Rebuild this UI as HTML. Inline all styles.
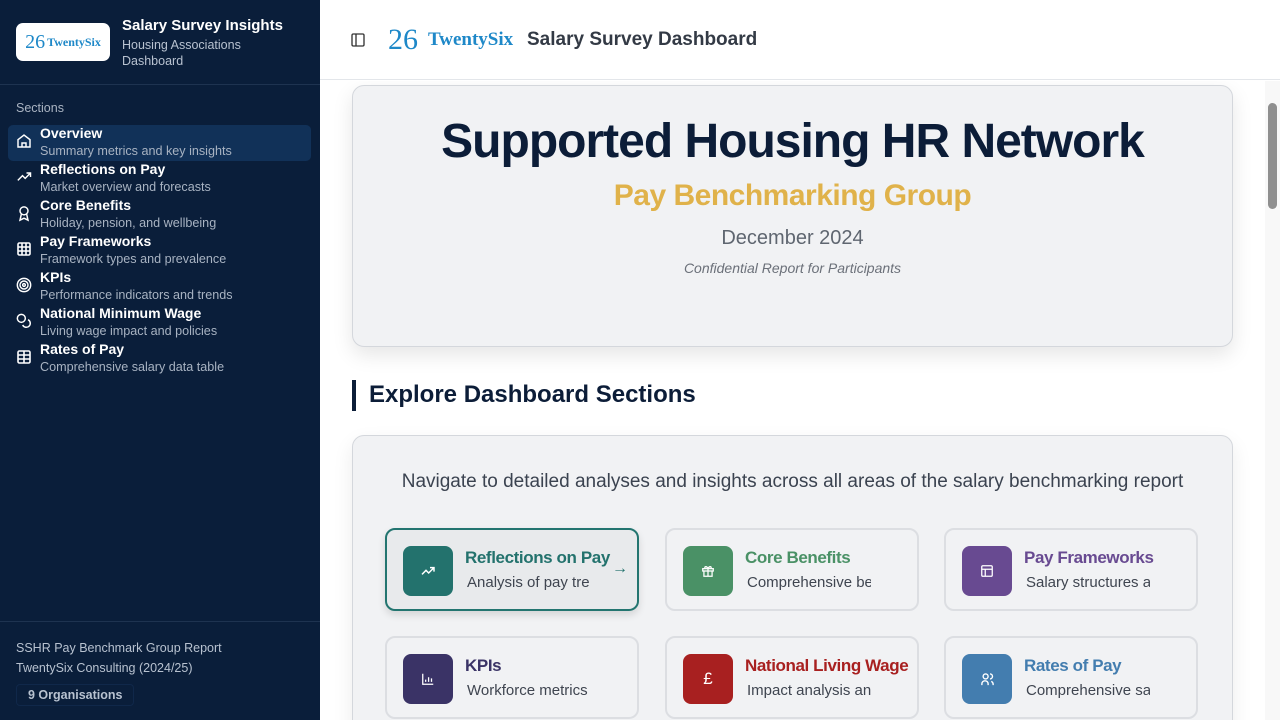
<!DOCTYPE html>
<html><head><meta charset="utf-8"><style>
*{box-sizing:border-box;margin:0;padding:0}
body{width:1280px;height:720px;overflow:hidden;font-family:"Liberation Sans",sans-serif;background:#fff;position:relative}
.sb{position:absolute;left:0;top:0;width:320px;height:720px;background:#0a1e3a;color:#fff}
.hdr{height:85px;border-bottom:1px solid #1e3350;position:relative}
.logo{position:absolute;left:16px;top:23px;width:94px;height:38px;background:#fff;border-radius:7px;display:flex;align-items:center;justify-content:center;color:#1e88c8;font-family:"Liberation Serif",serif;font-size:12px;font-weight:bold}
.ht{position:absolute;left:122px;top:17px}
.ht b{font-size:15px;display:block;margin-bottom:3px}
.ht span{font-size:12.5px;color:#b8c2d0;line-height:16px;display:block}
.sec{position:absolute;left:16px;top:101px;font-size:12.5px;color:#aab4c2}
.nav{position:absolute;left:8px;top:125px;width:303px}
.it{height:36px;position:relative;border-radius:5px}
.it.a{background:#113158}
.it svg{position:absolute;left:8px;top:8px}
.it b{position:absolute;left:32px;top:0px;font-size:14px;font-weight:bold}
.it span{position:absolute;left:32px;top:19px;font-size:12.6px;color:#a8b3c2}
.ft{position:absolute;left:0;top:621px;width:320px;border-top:1px solid #1e3350;padding:16px;font-size:12.5px;color:#b8c2d0;line-height:20px}
.badge{display:inline-block;margin-top:6px;padding:0 11px;font-weight:bold;border:1px solid #10284a;border-radius:4px}
.top{position:absolute;left:320px;top:0;width:960px;height:80px;border-bottom:1px solid #e3e6ea;background:#fff}
.main{position:absolute;left:320px;top:81px;width:945px;height:639px;background:#fff;overflow:hidden}
.sbar{position:absolute;left:1265px;top:81px;width:15px;height:639px;background:#f8f8f8}
.thumb{position:absolute;left:1268px;top:103px;width:9px;height:106px;background:#8f8f8f;border-radius:5px}
.hero{position:absolute;left:32px;top:4px;width:881px;height:262px;background:#f1f2f4;border:1px solid #d4d7dc;border-radius:12px;box-shadow:0 8px 20px rgba(0,0,0,.1);text-align:center}
.h1{margin-top:28px;font-size:48px;font-weight:bold;color:#0c1d38;letter-spacing:-1px}
.h2{margin-top:10px;font-size:30px;font-weight:bold;color:#e0b24a;letter-spacing:-.5px}
.h3{margin-top:14px;font-size:20px;color:#5f6670}
.h4{margin-top:10px;font-size:14px;font-style:italic;color:#6b7079}
.st{position:absolute;left:32px;top:299px;height:31px;border-left:4px solid #0c1d38;padding-left:13px;font-size:24px;font-weight:bold;color:#0c1d38;line-height:30px}
.panel{position:absolute;left:32px;top:354px;width:881px;height:320px;background:#f1f2f4;border:1px solid #d4d7dc;border-radius:12px;box-shadow:0 8px 20px rgba(0,0,0,.08)}
.pt{position:absolute;top:35px;width:100%;text-align:center;font-size:19px;color:#3b4350}
.c{position:absolute;width:254px;height:83px;border:2px solid #dcdee2;border-radius:10px;background:#f1f2f4;overflow:hidden}
.c.a{border-color:#237570;background:#e8eaec;box-shadow:0 4px 8px rgba(0,0,0,.12)}
.ic{position:absolute;left:16px;top:16px;width:50px;height:50px;border-radius:8px;display:flex;align-items:center;justify-content:center;color:#fff}
.c b{position:absolute;left:78px;top:18px;font-size:17px;font-weight:bold;white-space:nowrap;letter-spacing:-.4px}
.c span{position:absolute;left:80px;top:44px;width:124px;font-size:15px;color:#3f4550;white-space:nowrap;overflow:hidden}
</style></head><body>
<div class="sb">
 <div class="hdr">
  <div class="logo"><span style="font-size:20px;font-weight:normal;margin-right:2px">26</span>TwentySix</div>
  <div class="ht"><b>Salary Survey Insights</b><span>Housing Associations</span><span>Dashboard</span></div>
 </div>
 <div class="sec">Sections</div>
 <div class="nav">
  <div class="it a"><svg width="16" height="16" viewBox="0 0 24 24" fill="none" stroke="#fff" stroke-width="2.2"><path d="M3 10l9-7 9 7v11H3z"/><path d="M9 21v-6h6v6"/></svg><b>Overview</b><span>Summary metrics and key insights</span></div>
  <div class="it"><svg width="17" height="16" viewBox="0 0 24 24" fill="none" stroke="#fff" stroke-width="2.2"><path d="M2 17l7-7 4 4 8-8M15 6h6v6"/></svg><b>Reflections on Pay</b><span>Market overview and forecasts</span></div>
  <div class="it"><svg width="16" height="17" viewBox="0 0 24 24" fill="none" stroke="#fff" stroke-width="2.2"><circle cx="12" cy="8" r="6"/><path d="M8 13l-2 9 6-3 6 3-2-9"/></svg><b>Core Benefits</b><span>Holiday, pension, and wellbeing</span></div>
  <div class="it"><svg width="16" height="16" viewBox="0 0 24 24" fill="none" stroke="#fff" stroke-width="2.4"><rect x="3" y="3" width="18" height="18" rx="2"/><path d="M3 9h18M3 15h18M9 3v18M15 3v18"/></svg><b>Pay Frameworks</b><span>Framework types and prevalence</span></div>
  <div class="it"><svg width="16" height="16" viewBox="0 0 24 24" fill="none" stroke="#fff" stroke-width="2.2"><circle cx="12" cy="12" r="10"/><circle cx="12" cy="12" r="6"/><circle cx="12" cy="12" r="2"/></svg><b>KPIs</b><span>Performance indicators and trends</span></div>
  <div class="it"><svg width="16" height="16" viewBox="0 0 24 24" fill="none" stroke="#fff" stroke-width="2.2"><circle cx="8" cy="8" r="6"/><path d="M18 10a6 6 0 1 1-8 8"/></svg><b>National Minimum Wage</b><span>Living wage impact and policies</span></div>
  <div class="it"><svg width="16" height="16" viewBox="0 0 24 24" fill="none" stroke="#fff" stroke-width="2.4"><rect x="3" y="3" width="18" height="18" rx="2"/><path d="M3 9h18M3 15h18M12 3v18"/></svg><b>Rates of Pay</b><span>Comprehensive salary data table</span></div>
 </div>
 <div class="ft">SSHR Pay Benchmark Group Report<br>TwentySix Consulting (2024/25)<br><span class="badge">9 Organisations</span></div>
</div>
<div class="top">
 <svg style="position:absolute;left:30px;top:32px" width="16" height="16" viewBox="0 0 24 24" fill="none" stroke="#333" stroke-width="2"><rect x="3" y="3" width="18" height="18" rx="2"/><path d="M9 3v18"/></svg>
 <div style="position:absolute;left:68px;top:22px;color:#1e88c8;font-family:'Liberation Serif',serif;font-size:30px;line-height:36px">26</div>
 <div style="position:absolute;left:108px;top:29px;color:#1e88c8;font-family:'Liberation Serif',serif;font-size:19px;font-weight:bold">TwentySix</div>
 <div style="position:absolute;left:207px;top:29px;font-size:19px;font-weight:bold;color:#333a45">Salary Survey Dashboard</div>
</div>
<div class="main">
 <div class="hero"><div class="h1">Supported Housing HR Network</div><div class="h2">Pay Benchmarking Group</div><div class="h3">December 2024</div><div class="h4">Confidential Report for Participants</div></div>
 <div class="st">Explore Dashboard Sections</div>
 <div class="panel">
  <div class="pt">Navigate to detailed analyses and insights across all areas of the salary benchmarking report</div>
  <div class="c a" style="left:32px;top:92px"><div class="ic" style="background:#23726d"><svg width="16" height="16" viewBox="0 0 24 24" fill="none" stroke="#fff" stroke-width="2.2"><path d="M3 17l6-6 4 4 8-8M15 7h6v6"/></svg></div><b style="color:#23726d">Reflections on Pay</b><span>Analysis of pay tre</span><div style="position:absolute;left:225px;top:30px;color:#23726d;font-size:16px">→</div></div>
  <div class="c" style="left:312px;top:92px"><div class="ic" style="background:#4a9166"><svg width="14" height="14" viewBox="0 0 24 24" fill="none" stroke="#fff" stroke-width="2.2"><rect x="3" y="8" width="18" height="4"/><path d="M5 12v9h14v-9M12 8v13M12 8c-2-5-7-4-5 0M12 8c2-5 7-4 5 0"/></svg></div><b style="color:#4a9166">Core Benefits</b><span>Comprehensive be</span></div>
  <div class="c" style="left:591px;top:92px"><div class="ic" style="background:#684a91"><svg width="14" height="14" viewBox="0 0 24 24" fill="none" stroke="#fff" stroke-width="2.2"><rect x="3" y="3" width="18" height="18" rx="2"/><path d="M3 9h18M9 9v12"/></svg></div><b style="color:#684a91">Pay Frameworks</b><span>Salary structures a</span></div>
  <div class="c" style="left:32px;top:200px"><div class="ic" style="background:#3a3366"><svg width="14" height="14" viewBox="0 0 24 24" fill="none" stroke="#fff" stroke-width="2.2"><path d="M3 3v18h18M8 17v-4M13 17V9M18 17v-6"/></svg></div><b style="color:#3a3366">KPIs</b><span>Workforce metrics</span></div>
  <div class="c" style="left:312px;top:200px"><div class="ic" style="background:#a82020;font-size:17px">£</div><b style="color:#a82020">National Living Wage</b><span>Impact analysis an</span></div>
  <div class="c" style="left:591px;top:200px"><div class="ic" style="background:#437daf"><svg width="15" height="15" viewBox="0 0 24 24" fill="none" stroke="#fff" stroke-width="2.2"><circle cx="9" cy="7" r="4"/><path d="M3 21v-2a5 5 0 0 1 10 0v2M16 3a4 4 0 0 1 0 8M21 21v-2a5 5 0 0 0-3-4"/></svg></div><b style="color:#437daf">Rates of Pay</b><span>Comprehensive sa</span></div>
 </div>
</div>
<div class="sbar"></div><div class="thumb"></div>
</body></html>
